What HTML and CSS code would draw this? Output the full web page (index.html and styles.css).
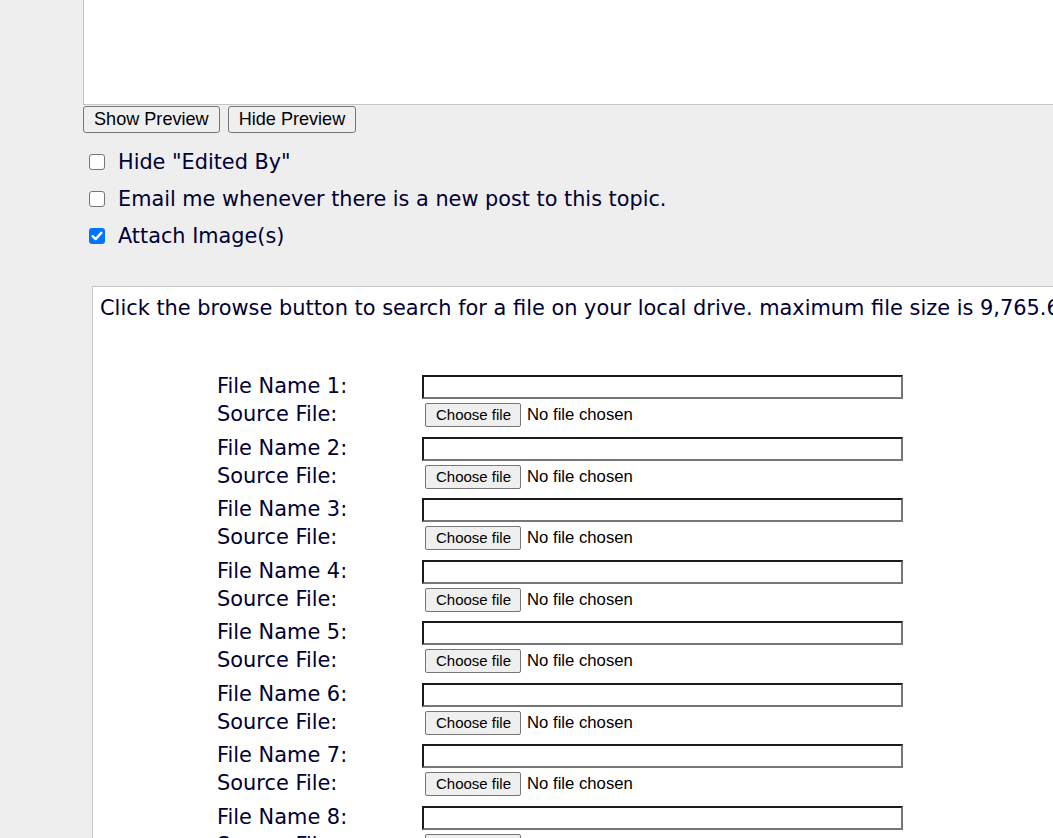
FILE: index.html
```html
<!DOCTYPE html>
<html>
<head>
<meta charset="utf-8">
<link rel="stylesheet" href="styles.css">
</head>
<body>
<div class="page">
  <div class="editor"></div>
  <div class="preview-buttons">
    <button class="btn">Show Preview</button>
    <button class="btn">Hide Preview</button>
  </div>
  <div class="options">
    <label class="opt"><span class="cb"></span><span>Hide "Edited By"</span></label>
    <label class="opt"><span class="cb"></span><span>Email me whenever there is a new post to this topic.</span></label>
    <label class="opt"><span class="cb checked"><svg viewBox="0 0 16 16" width="16" height="16"><path d="M3.6 8.2 L6.6 11.1 L12.4 4.8" fill="none" stroke="#fff" stroke-width="2.4" stroke-linecap="round" stroke-linejoin="round"/></svg></span><span>Attach Image(s)</span></label>
  </div>
  <div class="attach">
    <div class="intro">Click the browse button to search for a file on your local drive. maximum file size is 9,765.625 KB</div>
    <div class="files">
      <div class="lbl">File Name 1:</div><div class="fld"><span class="textbox"></span></div>
      <div class="lbl src">Source File:</div><div class="fld"><span class="choose">Choose file</span><span class="nofile">No file chosen</span></div>
      <div class="lbl">File Name 2:</div><div class="fld"><span class="textbox"></span></div>
      <div class="lbl src">Source File:</div><div class="fld"><span class="choose">Choose file</span><span class="nofile">No file chosen</span></div>
      <div class="lbl">File Name 3:</div><div class="fld"><span class="textbox"></span></div>
      <div class="lbl src">Source File:</div><div class="fld"><span class="choose">Choose file</span><span class="nofile">No file chosen</span></div>
      <div class="lbl">File Name 4:</div><div class="fld"><span class="textbox"></span></div>
      <div class="lbl src">Source File:</div><div class="fld"><span class="choose">Choose file</span><span class="nofile">No file chosen</span></div>
      <div class="lbl">File Name 5:</div><div class="fld"><span class="textbox"></span></div>
      <div class="lbl src">Source File:</div><div class="fld"><span class="choose">Choose file</span><span class="nofile">No file chosen</span></div>
      <div class="lbl">File Name 6:</div><div class="fld"><span class="textbox"></span></div>
      <div class="lbl src">Source File:</div><div class="fld"><span class="choose">Choose file</span><span class="nofile">No file chosen</span></div>
      <div class="lbl">File Name 7:</div><div class="fld"><span class="textbox"></span></div>
      <div class="lbl src">Source File:</div><div class="fld"><span class="choose">Choose file</span><span class="nofile">No file chosen</span></div>
      <div class="lbl">File Name 8:</div><div class="fld"><span class="textbox"></span></div>
      <div class="lbl src">Source File:</div><div class="fld"><span class="choose">Choose file</span><span class="nofile">No file chosen</span></div>
    </div>
  </div>
</div>
</body>
</html>
```

FILE: styles.css
```css
html, body {
  margin: 0;
  padding: 0;
  overflow: hidden;
  background: #eeeeee;
}
body {
  font-family: "DejaVu Sans", Verdana, sans-serif;
  color: #000033;
  width: 1053px;
  height: 838px;
}
.page {
  padding-left: 83px;
  width: 1200px;
}
.editor {
  height: 104px;
  background: #ffffff;
  border-left: 1px solid #c4c4c4;
  border-bottom: 1px solid #c4c4c4;
  width: 1100px;
}
.preview-buttons {
  display: flex;
  gap: 8px;
  margin-top: 1px;
}
.btn {
  font-family: "Liberation Sans", Arial, sans-serif;
  font-size: 18.1px;
  color: #000;
  background: #efefef;
  border: 1px solid #767676;
  border-radius: 3px;
  height: 27px;
  padding: 0 10px;
  margin: 0;
  line-height: 25px;
}
.options {
  padding-top: 17px;
  padding-left: 6px;
  display: flex;
  flex-direction: column;
  gap: 13px;
}
.opt {
  display: flex;
  align-items: center;
  gap: 13px;
  font-size: 20.8px;
  height: 24px;
  line-height: 24px;
}
.cb {
  width: 14px;
  height: 14px;
  border: 1px solid #767676;
  border-radius: 3px;
  background: #fff;
  flex: none;
  display: flex;
}
.cb.checked {
  width: 16px;
  height: 16px;
  border: none;
  background: #0075ff;
}
.attach {
  margin-top: 38px;
  margin-left: 9px;
  background: #fff;
  border-top: 1px solid #c8c8c8;
  border-left: 1px solid #c8c8c8;
  width: 1100px;
  height: 600px;
}
.intro {
  font-size: 20.9px;
  padding: 7px 0 0 7px;
  line-height: 28px;
  white-space: nowrap;
}
.files {
  display: grid;
  grid-template-columns: 205px 500px;
  grid-template-rows: repeat(8, 28px 33.57px);
  margin: 53px 0 0 124px;
  font-size: 20.9px;
}
.lbl {
  line-height: 22px;
}
.lbl.src {
  margin-top: 0;
}
.fld {
  display: flex;
  align-items: flex-start;
}
.textbox {
  display: block;
  width: 477px;
  height: 20px;
  border-style: solid;
  border-width: 2px;
  border-color: #1b1b1b #767676 #767676 #1b1b1b;
  background: #fff;
}
.choose {
  display: inline-block;
  font-family: "Liberation Sans", Arial, sans-serif;
  font-size: 15px;
  color: #000;
  background: #efefef;
  border: 1px solid #767676;
  border-radius: 2px;
  height: 22px;
  line-height: 22px;
  padding: 0 9px 0 10px;
  margin: 0 0 0 3px;
}
.nofile {
  font-family: "Liberation Sans", Arial, sans-serif;
  font-size: 16.7px;
  color: #000;
  margin: 0 0 0 6px;
  line-height: 24px;
}
```
